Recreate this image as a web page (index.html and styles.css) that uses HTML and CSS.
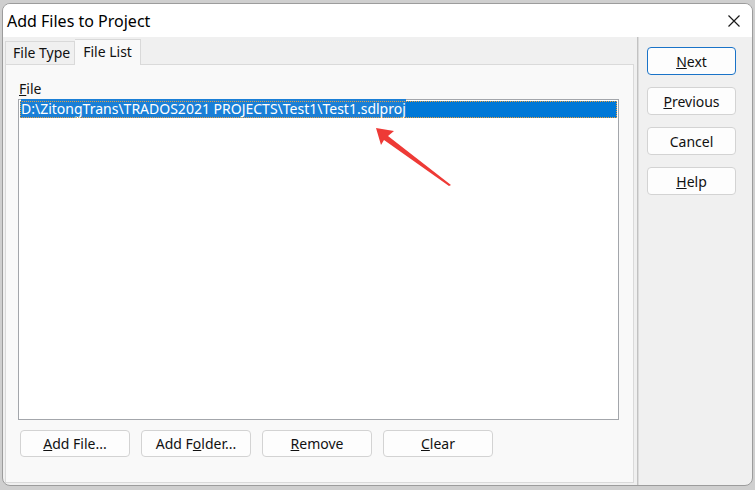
FILE: index.html
```html
<!DOCTYPE html>
<html lang="en">
<head>
  <meta charset="UTF-8">
  <title>Add Files to Project</title>
  <link rel="stylesheet" href="styles.css">
</head>
<body>
  <div class="window">
    <div class="titlebar">
      <span class="title">Add Files to Project</span>
      <svg class="close" width="12" height="12" viewBox="0 0 12 12">
        <path d="M0.5 0.5 L11.5 11.5 M11.5 0.5 L0.5 11.5" stroke="#1a1a1a" stroke-width="1.2" fill="none"/>
      </svg>
    </div>
    <div class="main">
      <div class="left">
        <div class="tabs">
          <div class="tab">File Type</div>
          <div class="tab active">File List</div>
        </div>
        <div class="panel">
          <div class="label"><u>F</u>ile</div>
          <div class="listbox">
            <div class="row selected"><span class="path">D:\ZitongTrans\TRADOS2021 PROJECTS\Test1\Test1.sdlproj</span></div>
          </div>
          <div class="actions">
            <button class="btn wide"><u>A</u>dd File...</button>
            <button class="btn wide">Add F<u>o</u>lder...</button>
            <button class="btn wide"><u>R</u>emove</button>
            <button class="btn wide"><u>C</u>lear</button>
          </div>
        </div>
      </div>
      <div class="right">
        <button class="btn side default"><u>N</u>ext</button>
        <button class="btn side"><u>P</u>revious</button>
        <button class="btn side">Cancel</button>
        <button class="btn side"><u>H</u>elp</button>
      </div>
    </div>
  </div>

  <!-- red annotation arrow pointing at the selected file -->
  <svg class="arrow" width="755" height="490" viewBox="0 0 755 490">
    <polygon points="376,128 394,131 388,136 451,185 449,186 384,140 381,145" fill="#ee3a36"/>
  </svg>
</body>
</html>
```

FILE: styles.css
```css
html, body {
  margin: 0;
  height: 100%;
}

body {
  background: #cfcfcf;
  padding: 3px 0 0 2px;
  box-sizing: border-box;
  font-family: "Noto Sans", "Open Sans", sans-serif;
  font-size: 14px;
  color: #111;
  position: relative;
  overflow: hidden;
}

.window {
  width: 751px;
  height: 483px;
  box-sizing: border-box;
  border: 1px solid #9c9c9c;
  border-radius: 8px;
  background: #f0f0f0;
  overflow: hidden;
}

.titlebar {
  height: 33px;
  background: #fff;
  display: flex;
  align-items: center;
  justify-content: space-between;
  padding: 1px 12px 0 4px;
  box-sizing: border-box;
}

.title {
  font-size: 16px;
  color: #000;
}

.main {
  display: flex;
  height: 448px;
}

.left {
  width: 635px;
  padding: 1px 0 0 2px;
  box-sizing: border-box;
  display: flex;
  flex-direction: column;
  border-right: 1px solid #c2c2c2;
}

.tabs {
  display: flex;
  align-items: flex-end;
  height: 26px;
}

.tab {
  height: 23px;
  box-sizing: border-box;
  border: 1px solid #d9d9d9;
  border-bottom: none;
  padding: 1px 4px 0 7px;
  background: #f0f0f0;
}

.tab.active {
  height: 26px;
  background: #f9f9f9;
  padding: 2px 8px 0 8px;
  border-left: none;
  margin-bottom: -1px;
  position: relative;
  z-index: 1;
}

.panel {
  width: 629px;
  height: 419px;
  box-sizing: border-box;
  border: 1px solid #dadada;
  background: #f9f9f9;
  padding: 14px 0 0 12px;
}

.label {
  height: 20px;
  padding-left: 1px;
}

.listbox {
  width: 601px;
  height: 321px;
  box-sizing: border-box;
  border: 1px solid #a3a6ab;
  background: #fff;
  padding: 1px;
}

.row {
  height: 17px;
  line-height: 16px;
  padding-left: 1px;
  white-space: nowrap;
}

.row.selected {
  background: #0078d7;
  color: #fff;
  outline: 1px dotted #e8a040;
  outline-offset: -1px;
}

.path {
  background: #1a7fd6;
}

.actions {
  display: flex;
  gap: 11px;
  margin: 10px 0 0 2px;
}

.btn {
  font-family: inherit;
  font-size: 14px;
  color: #111;
  background: #fdfdfd;
  border: 1px solid #d3d3d3;
  border-radius: 4px;
  padding: 0;
}

.btn.wide {
  width: 110px;
  height: 27px;
}

.right {
  flex: 1;
  border-left: 1px solid #dcdcdc;
  display: flex;
  flex-direction: column;
  gap: 12px;
  padding: 10px 0 0 8px;
}

.btn.side {
  width: 89px;
  height: 28px;
}

.btn.default {
  border-color: #1a73c8;
}

.arrow {
  position: absolute;
  left: 0;
  top: 0;
  pointer-events: none;
}
```
